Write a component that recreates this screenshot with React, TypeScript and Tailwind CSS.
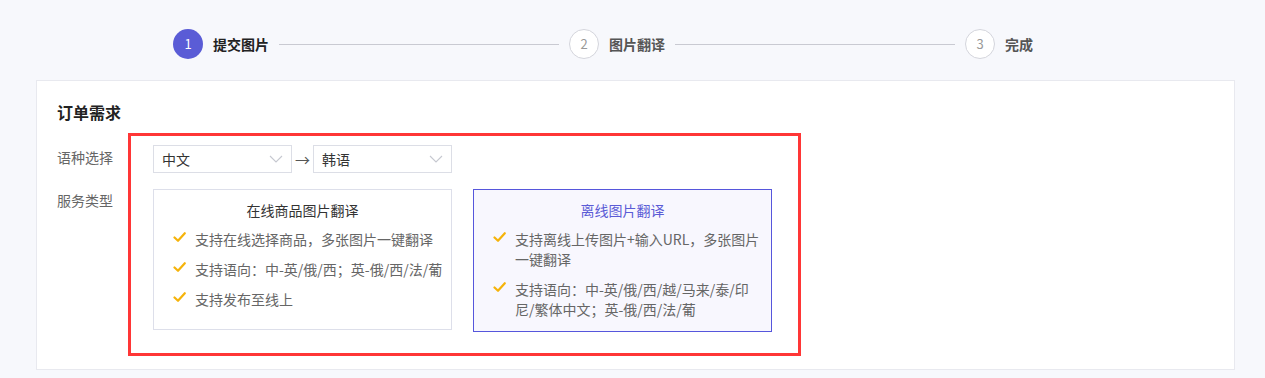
import React from "react";

const font = { fontFamily: '"Noto Sans CJK SC", "Noto Sans", sans-serif' };

function Check() {
  return (
    <svg width="13" height="11" viewBox="0 0 13 11" className="mt-[3px] shrink-0">
      <path d="M1.5 5.5 L5 8.8 L11.8 1.2" fill="none" stroke="#f5b30a" strokeWidth="2.2" strokeLinecap="round" strokeLinejoin="round" />
    </svg>
  );
}

function Chevron() {
  return (
    <svg width="14" height="8" viewBox="0 0 14 8">
      <path d="M1 1 L7 7 L13 1" fill="none" stroke="#c6c8d0" strokeWidth="1.1" />
    </svg>
  );
}

function Step({ n, label, active, last }: { n: number; label: string; active?: boolean; last?: boolean }) {
  return (
    <div className={`flex items-center ${last ? "" : "w-[396px]"}`}>
      <div
        className={`flex h-[30px] w-[30px] shrink-0 items-center justify-center rounded-full text-[13px] ${
          active ? "bg-[#5a5cd6] text-white" : "border border-[#d4d5dc] bg-white text-[#999]"
        }`}
      >
        {n}
      </div>
      <span className={`ml-2.5 text-sm font-bold ${active ? "text-[#222]" : "text-[#555]"}`}>{label}</span>
      {!last && <div className="mx-2.5 h-px flex-1 bg-[#c9cad2]" />}
    </div>
  );
}

function Select({ value }: { value: string }) {
  return (
    <div className="flex h-[28px] w-[139px] items-center justify-between border border-[#dcdee6] bg-white pl-2 pr-2">
      <span className="text-sm text-[#333]">{value}</span>
      <Chevron />
    </div>
  );
}

const cardOn = "w-[299px] border border-solid text-[#5656dc] [border-color:#5656dc] bg-[#f8f7fe] px-[19px] pb-3 pt-2.5";
const cardOff = "w-[299px] border border-solid border-[#dddfea] bg-white px-[19px] pb-5 pt-2.5";

function ServiceCard({ title, items, selected }: { title: string; items: string[][]; selected?: boolean }) {
  return (
    <div className={selected ? cardOn : cardOff}>
      <div className={`text-center text-sm leading-5 ${selected ? "text-[#5b5cd6]" : "text-[#333]"}`}>{title}</div>
      <ul className="mt-[9px] space-y-2.5">
        {items.map((lines) => (
          <li key={lines.join("")} className="flex gap-[9px]">
            <Check />
            <span className="whitespace-nowrap text-sm leading-5 text-[#666]">
              {lines.map((l, i) => (
                <React.Fragment key={l}>
                  {i > 0 && <br />}
                  {l}
                </React.Fragment>
              ))}
            </span>
          </li>
        ))}
      </ul>
    </div>
  );
}

export default function App() {
  return (
    <div className="min-h-[378px] bg-[#f7f8fc] pt-[29px]" style={font}>
      <div className="ml-[173px] flex">
        <Step n={1} label="提交图片" active />
        <Step n={2} label="图片翻译" />
        <Step n={3} label="完成" last />
      </div>

      <div className="ml-9 mr-[30px] mt-[21px] border border-[#e8e9ef] bg-white pb-[13px] pl-5 pt-[19px]">
        <h2 className="text-base font-bold leading-6 text-[#222]">订单需求</h2>
        <div className="mt-[9px] flex">
          <div className="w-[71px] pt-2.5 text-sm text-[#666]">
            <div className="leading-[28px]">语种选择</div>
            <div className="mt-[19px] leading-5">服务类型</div>
          </div>
          <div className="border-[3px] border-[#ff3636] pb-[21px] pl-[22px] pr-[26px] pt-[9px]">
            <div className="flex items-center">
              <Select value="中文" />
              <span className="mx-[3px] text-[15px] leading-none text-[#555]">→</span>
              <Select value="韩语" />
            </div>
            <div className="mt-4 flex items-start gap-[21px]">
              <ServiceCard
                title="在线商品图片翻译"
                items={[["支持在线选择商品，多张图片一键翻译"], ["支持语向：中-英/俄/西；英-俄/西/法/葡"], ["支持发布至线上"]]}
              />
              <ServiceCard
                title="离线图片翻译"
                selected
                items={[
                  ["支持离线上传图片+输入URL，多张图片", "一键翻译"],
                  ["支持语向：中-英/俄/西/越/马来/泰/印", "尼/繁体中文；英-俄/西/法/葡"],
                ]}
              />
            </div>
          </div>
        </div>
      </div>
    </div>
  );
}
